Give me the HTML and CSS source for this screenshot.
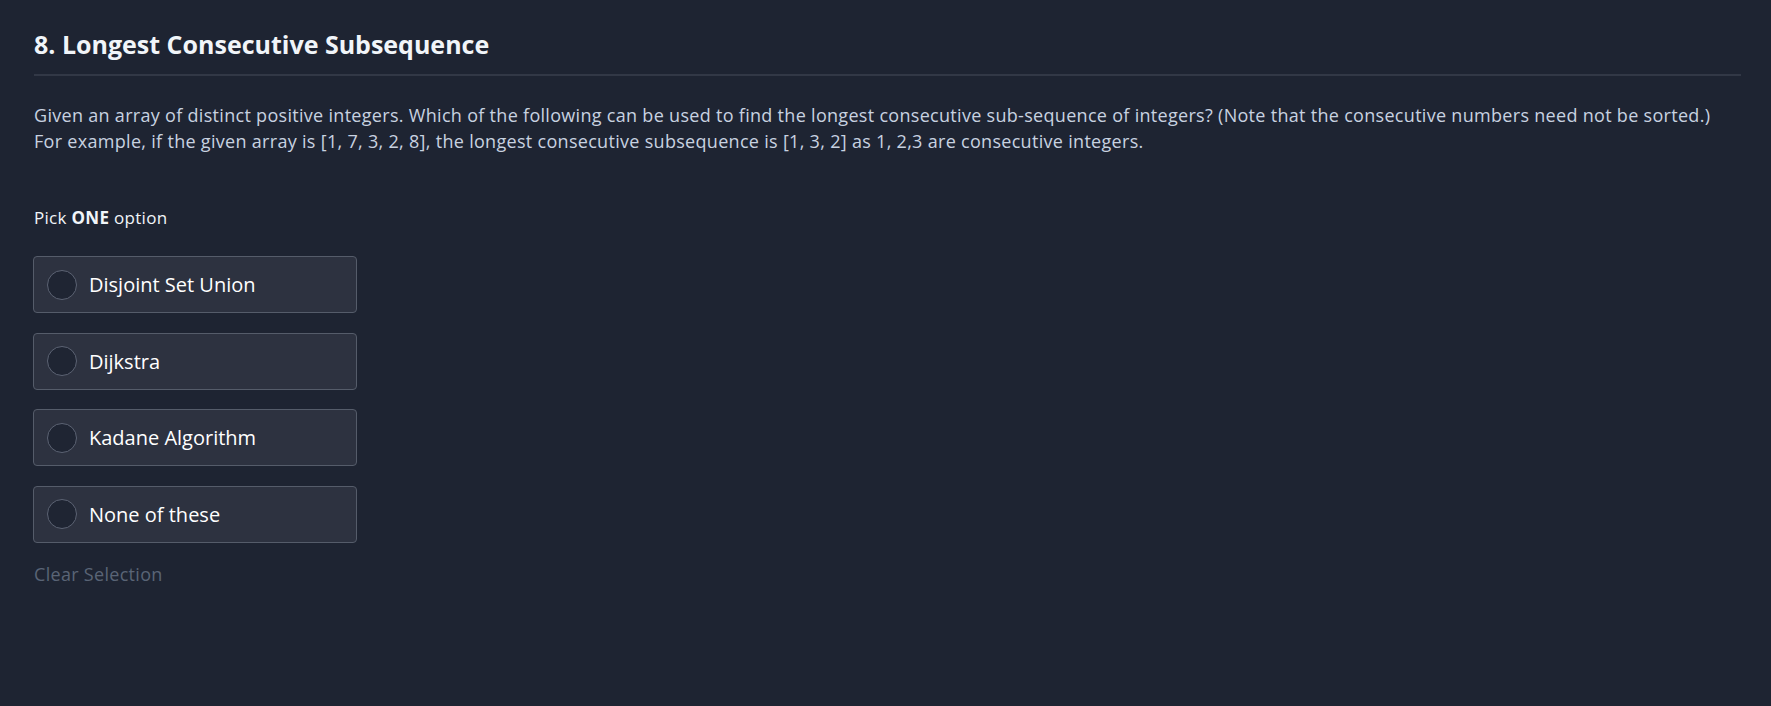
FILE: index.html
```html
<!DOCTYPE html>
<html>
<head>
<meta charset="utf-8">
<link rel="stylesheet" href="styles.css">
</head>
<body>
<main class="question">
  <h1 class="title">8. Longest Consecutive Subsequence</h1>
  <div class="desc">
    <p>Given an array of distinct positive integers. Which of the following can be used to find the longest consecutive sub-sequence of integers? (Note that the consecutive numbers need not be sorted.)</p>
    <p>For example, if the given array is [1, 7, 3, 2, 8], the longest consecutive subsequence is [1, 3, 2] as 1, 2,3 are consecutive integers.</p>
  </div>
  <div class="pick">Pick <strong>ONE</strong> option</div>
  <div class="options">
    <label class="option"><span class="radio"></span><span class="label">Disjoint Set Union</span></label>
    <label class="option"><span class="radio"></span><span class="label">Dijkstra</span></label>
    <label class="option"><span class="radio"></span><span class="label">Kadane Algorithm</span></label>
    <label class="option"><span class="radio"></span><span class="label">None of these</span></label>
  </div>
  <div class="clear">Clear Selection</div>
</main>
</body>
</html>
```
FILE: styles.css
```css
html, body {
  margin: 0;
  padding: 0;
  background: #1e2432;
  height: 100%;
}
body {
  font-family: "Open Sans", "Noto Sans", sans-serif;
  color: #c6cfdc;
}
.question {
  padding: 27px 30px 0 34px;
}
.title {
  margin: 0;
  font-size: 25px;
  font-weight: 700;
  line-height: 34px;
  color: #f1f5f9;
  padding-bottom: 13px;
  border-bottom: 2px solid #323846;
}
.desc {
  margin-top: 26px;
  font-size: 18px;
  letter-spacing: 0.3px;
  line-height: 26px;
  color: #c8d2e0;
}
.desc p {
  margin: 0;
}
.pick {
  margin-top: 52px;
  font-size: 17px;
  letter-spacing: 0.3px;
  line-height: 24px;
  color: #f1f5f9;
}
.pick strong {
  font-weight: 700;
}
.options {
  margin-top: 26px;
  display: flex;
  flex-direction: column;
  gap: 19.5px;
  margin-left: -1px;
}
.option {
  box-sizing: border-box;
  width: 324px;
  height: 57px;
  display: flex;
  align-items: center;
  background: #2d3240;
  border: 1px solid #555c6a;
  border-radius: 4px;
  padding-left: 13px;
}
.radio {
  box-sizing: border-box;
  width: 30px;
  height: 30px;
  border-radius: 50%;
  border: 1px solid #5c6373;
  background: #1f2533;
  flex: none;
}
.label {
  margin-left: 12px;
  font-size: 20px;
  color: #ffffff;
}
.clear {
  margin-top: 19.5px;
  font-size: 18px;
  letter-spacing: 0.3px;
  line-height: 24px;
  color: #5a6476;
}
```
